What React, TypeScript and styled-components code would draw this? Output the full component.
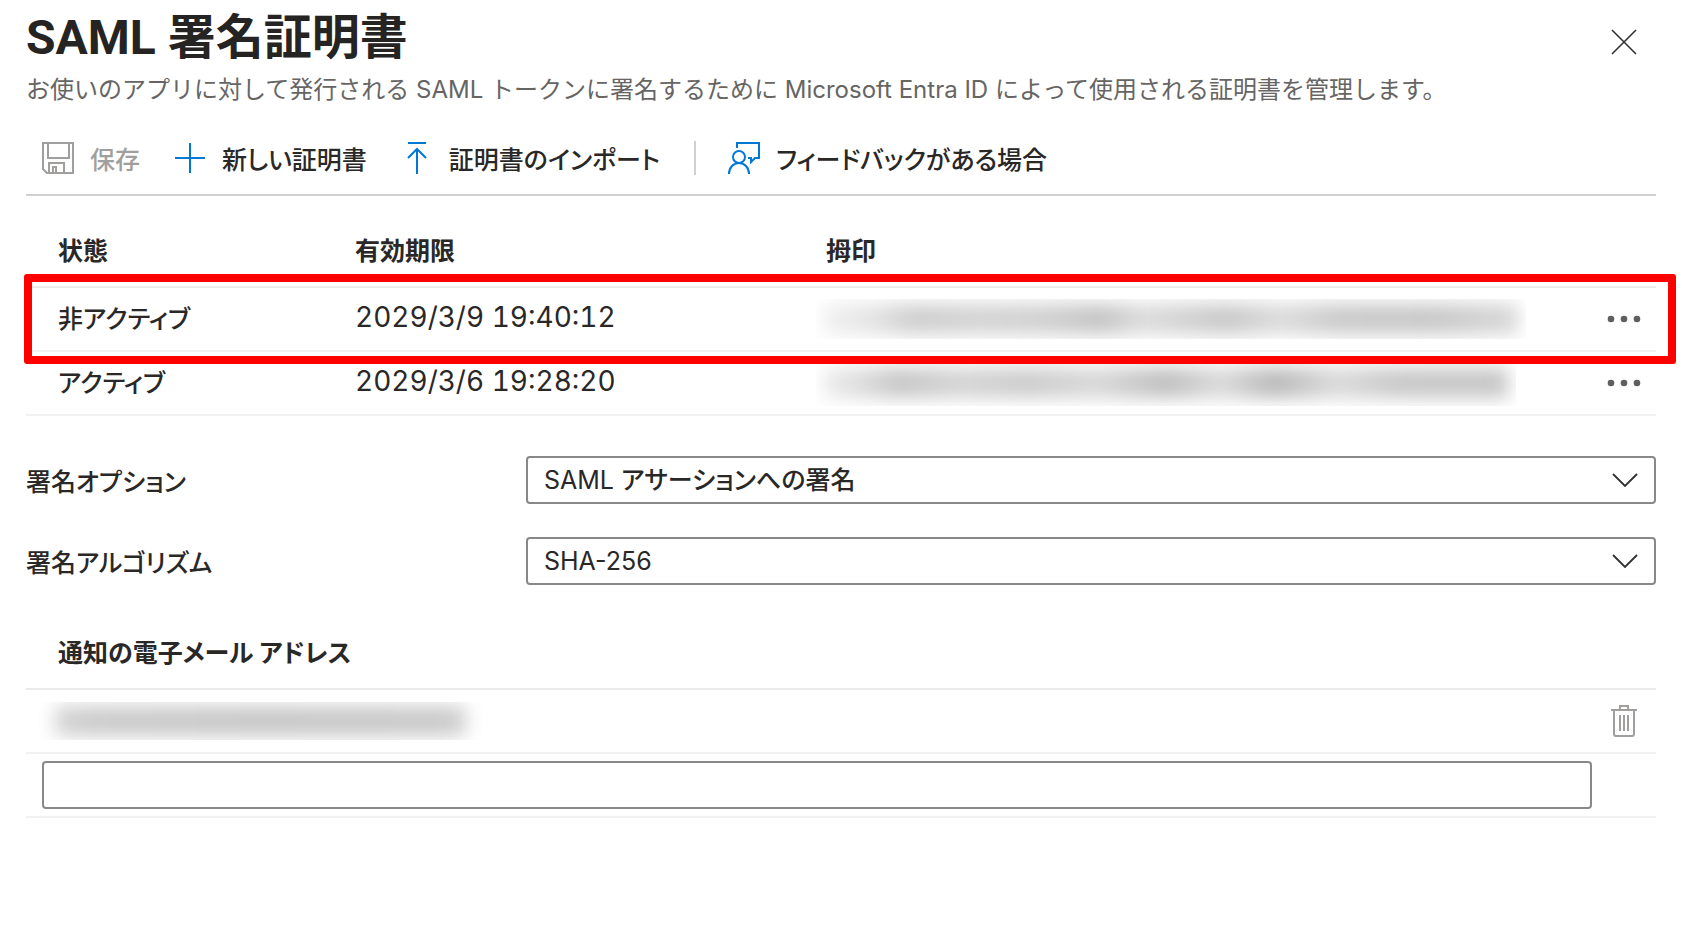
import React from "react";
import styled, { createGlobalStyle } from "styled-components";

const GlobalStyle = createGlobalStyle`
  *, *::before, *::after { box-sizing: border-box; }
  body {
    margin: 0;
    background: #fff;
    color: #292827;
    font-family: "Noto Sans CJK JP", sans-serif;
    font-size: 25px;
    font-weight: 500;
    font-feature-settings: "palt";
    line-height: 36px;
  }
  button, input, select { font: inherit; color: inherit; font-feature-settings: inherit; }
`;

const Panel = styled.main`
  padding: 0 26px 32px;
`;

const Header = styled.header`
  display: flex;
  justify-content: space-between;
  align-items: flex-start;
`;

const Title = styled.h1`
  margin: 0;
  padding-top: 8px;
  font-family: Roboto, "Noto Sans CJK JP", sans-serif;
  font-feature-settings: normal;
  font-size: 48px;
  font-weight: 700;
  line-height: 60px;
  color: #252423;
`;

const Subtitle = styled.p`
  margin: 0;
  padding-top: 6px;
  font-family: Inter, "Noto Sans CJK JP", sans-serif;
  font-feature-settings: normal;
  font-size: 24px;
  font-weight: 400;
  line-height: 32px;
  color: #666564;
`;

const IconButton = styled.button`
  display: flex;
  align-items: center;
  justify-content: center;
  width: 64px;
  height: 44px;
  padding: 0;
  border: 0;
  background: none;
`;

const CloseButton = styled(IconButton)`
  margin-top: 20px;
`;

const Toolbar = styled.div`
  display: flex;
  align-items: center;
  height: 76px;
  margin-top: 14px;
  margin-bottom: 16px;
  padding: 2px 16px 0;
  border-bottom: 2px solid #d2d0ce;
`;

const Command = styled.button`
  display: flex;
  align-items: center;
  gap: 16px;
  margin-right: 34px;
  padding: 0;
  border: 0;
  background: none;
  white-space: nowrap;
  &:disabled { color: #a19f9d; }
`;

const Divider = styled.span`
  width: 2px;
  height: 34px;
  margin-right: 32px;
  background: #d2d0ce;
`;

const Table = styled.table`
  width: 100%;
  border-collapse: separate;
  border-spacing: 0;
  table-layout: fixed;
`;

const HeadCell = styled.th<{ $width?: string }>`
  width: ${(p) => p.$width ?? "auto"};
  height: 76px;
  padding: 0 0 0 32px;
  border-bottom: 2px solid #edebe9;
  font-weight: 700;
  text-align: left;
`;

const Cell = styled.td<{ $pad?: number }>`
  height: 64px;
  padding: 0 0 0 ${(p) => p.$pad ?? 32}px;
  border-bottom: 2px solid #f3f2f1;
`;

const TextCell = styled(Cell)`
  padding-bottom: 4px;
`;

const DateText = styled.time`
  display: block;
  font-family: Inter, sans-serif;
  font-size: 28px;
  font-weight: 400;
  font-feature-settings: normal;
  font-variant-numeric: tabular-nums;
`;

const TableArea = styled.section`
  position: relative;
`;

const Highlight = styled.div`
  position: absolute;
  top: 62px;
  left: -2px;
  right: -20px;
  height: 90px;
  border: 8px solid #f00;
  border-radius: 3px;
  pointer-events: none;
`;

const Redacted = styled.div<{ $width: number; $height: number; $inset: number }>`
  display: flex;
  align-items: center;
  width: ${(p) => p.$width}px;
  height: ${(p) => p.$height}px;
  padding: 0 ${(p) => p.$inset}px;
  overflow: hidden;
`;

const Smudge = styled.div<{ $tones: string }>`
  flex: 1;
  height: 30px;
  background: linear-gradient(90deg, ${(p) => p.$tones});
  filter: blur(9px);
`;

const Fields = styled.section`
  display: flex;
  flex-direction: column;
  gap: 33px;
  padding-top: 40px;
`;

const Field = styled.div`
  display: flex;
  align-items: center;
`;

const FieldLabel = styled.label`
  flex: 0 0 500px;
`;

const SelectBox = styled.div`
  display: grid;
  flex: 1;
  align-items: center;
  > * { grid-area: 1 / 1; }
  > svg { justify-self: end; margin-right: 18px; pointer-events: none; }
`;

const Select = styled.select`
  appearance: none;
  width: 100%;
  height: 48px;
  padding: 0 60px 0 16px;
  border: 2px solid #8a8886;
  border-radius: 4px;
  background: #fff;
  font-family: Inter, "Noto Sans CJK JP Medium", "Noto Sans CJK JP", sans-serif;
  font-weight: 400;
`;

const EmailInput = styled.input`
  display: block;
  width: 100%;
  height: 48px;
  padding: 0 16px;
  border: 2px solid #8a8886;
  border-radius: 4px;
  background: #fff;
`;

const EmailArea = styled.section`
  padding-top: 29px;
`;

const CloseIcon = () => (
  <svg width="26" height="26" viewBox="0 0 26 26" fill="none" stroke="#323130" strokeWidth="1.6">
    <path d="M1 1 25 25M25 1 1 25" />
  </svg>
);

const SaveIcon = () => (
  <svg width="32" height="34" viewBox="0 0 32 34" fill="none" stroke="#a19f9d" strokeWidth="2">
    <path d="M1 2h30v30H5l-4-4zM6 2v15h21V2M7 32V22h15v10M11 32v-6h3v6" />
  </svg>
);

const PlusIcon = () => (
  <svg width="32" height="30" viewBox="0 0 32 30" stroke="#0078d4" strokeWidth="2">
    <path d="M1 15h30M16 0v30" />
  </svg>
);

const UploadIcon = () => (
  <svg width="32" height="32" viewBox="0 0 32 32" fill="none" stroke="#0078d4" strokeWidth="2">
    <path d="M7 1h18M16 32V7M7 16l9-9 9 9" />
  </svg>
);

const FeedbackIcon = () => (
  <svg width="32" height="34" viewBox="0 0 32 34" fill="none" stroke="#0078d4" strokeWidth="2">
    <path d="M9 7V2h22v15h-4l-4 4v-4h-3" />
    <circle cx="11" cy="16" r="6" />
    <path d="M1 33c0-6 4-11 10-11s10 5 10 11" />
  </svg>
);

const MoreIcon = () => (
  <svg width="34" height="8" viewBox="0 0 34 8" fill="#605e5c">
    <circle cx="4" cy="4" r="3.3" />
    <circle cx="17" cy="4" r="3.3" />
    <circle cx="30" cy="4" r="3.3" />
  </svg>
);

const ChevronIcon = () => (
  <svg width="26" height="14" viewBox="0 0 26 14" fill="none" stroke="#323130" strokeWidth="1.8">
    <path d="M1 1l12 12L25 1" />
  </svg>
);

const TrashIcon = () => (
  <svg width="26" height="32" viewBox="0 0 26 32" fill="none" stroke="#a19f9d" strokeWidth="2">
    <path d="M0 5h26M3 5v24q0 2 2 2h16q2 0 2-2V5M9 5V1h8v4M9 10v16M13 10v16M17 10v16" />
  </svg>
);

const certificates = [
  {
    status: "非アクティブ",
    expires: "2029/3/9 19:40:12",
    width: 710,
    height: 40,
    tones:
      "#f0f0f0, #e4e4e4 7%, #cecece 13%, #d4d4d4 22%, #d0d0d0 32%, #c4c4c4 40%, #dcdcdc 46%, #c8c8c8 58%, #dcdcdc 66%, #cacaca 74%, #c8c8c8 88%, #d8d8d8",
  },
  {
    status: "アクティブ",
    expires: "2029/3/6 19:28:20",
    width: 700,
    height: 46,
    tones:
      "#ececec, #dedede 5%, #c6c6c6 11%, #d4d4d4 20%, #cccccc 30%, #d8d8d8 40%, #bebebe 50%, #dadada 58%, #b8b8b8 66%, #dadada 75%, #c8c8c8 84%, #c6c6c6",
  },
];

const fields = [
  { id: "signing-option", label: "署名オプション", value: "SAML アサーションへの署名" },
  { id: "signing-algorithm", label: "署名アルゴリズム", value: "SHA-256" },
];

export default function App() {
  return (
    <>
      <GlobalStyle />
      <Panel>
        <Header>
          <div>
            <Title>SAML 署名証明書</Title>
            <Subtitle>
              お使いのアプリに対して発行される SAML トークンに署名するために Microsoft Entra ID によって使用される証明書を管理します。
            </Subtitle>
          </div>
          <CloseButton type="button" aria-label="閉じる">
            <CloseIcon />
          </CloseButton>
        </Header>

        <Toolbar role="toolbar">
          <Command type="button" disabled>
            <SaveIcon />
            保存
          </Command>
          <Command type="button">
            <PlusIcon />
            新しい証明書
          </Command>
          <Command type="button">
            <UploadIcon />
            証明書のインポート
          </Command>
          <Divider />
          <Command type="button">
            <FeedbackIcon />
            フィードバックがある場合
          </Command>
        </Toolbar>

        <TableArea>
          <Table>
            <thead>
              <tr>
                <HeadCell scope="col" $width="297px">状態</HeadCell>
                <HeadCell scope="col" $width="471px">有効期限</HeadCell>
                <HeadCell scope="col">拇印</HeadCell>
                <HeadCell as="td" $width="64px" />
              </tr>
            </thead>
            <tbody>
              {certificates.map((c) => (
                <tr key={c.status}>
                  <TextCell>{c.status}</TextCell>
                  <TextCell><DateText>{c.expires}</DateText></TextCell>
                  <Cell $pad={22}>
                    <Redacted $width={c.width} $height={c.height} $inset={8}>
                      <Smudge $tones={c.tones} />
                    </Redacted>
                  </Cell>
                  <Cell $pad={0}>
                    <IconButton type="button" aria-label="その他">
                      <MoreIcon />
                    </IconButton>
                  </Cell>
                </tr>
              ))}
            </tbody>
          </Table>
          <Highlight />
        </TableArea>

        <Fields>
          {fields.map((f) => (
            <Field key={f.id}>
              <FieldLabel htmlFor={f.id}>{f.label}</FieldLabel>
              <SelectBox>
                <Select id={f.id} defaultValue={f.value}>
                  <option>{f.value}</option>
                </Select>
                <ChevronIcon />
              </SelectBox>
            </Field>
          ))}
        </Fields>

        <EmailArea>
          <Table>
            <thead>
              <tr>
                <HeadCell scope="col" id="email-heading">通知の電子メール アドレス</HeadCell>
                <HeadCell as="td" $width="64px" />
              </tr>
            </thead>
            <tbody>
              <tr>
                <Cell $pad={7}>
                  <Redacted $width={455} $height={38} $inset={22}>
                    <Smudge $tones="#d6d6d6, #cccccc 8%, #c8c8c8 50%, #cacaca 94%, #d2d2d2" />
                  </Redacted>
                </Cell>
                <Cell $pad={0}>
                  <IconButton type="button" aria-label="削除">
                    <TrashIcon />
                  </IconButton>
                </Cell>
              </tr>
              <tr>
                <Cell $pad={16}>
                  <EmailInput type="email" aria-labelledby="email-heading" />
                </Cell>
                <Cell $pad={0} />
              </tr>
            </tbody>
          </Table>
        </EmailArea>
      </Panel>
    </>
  );
}
